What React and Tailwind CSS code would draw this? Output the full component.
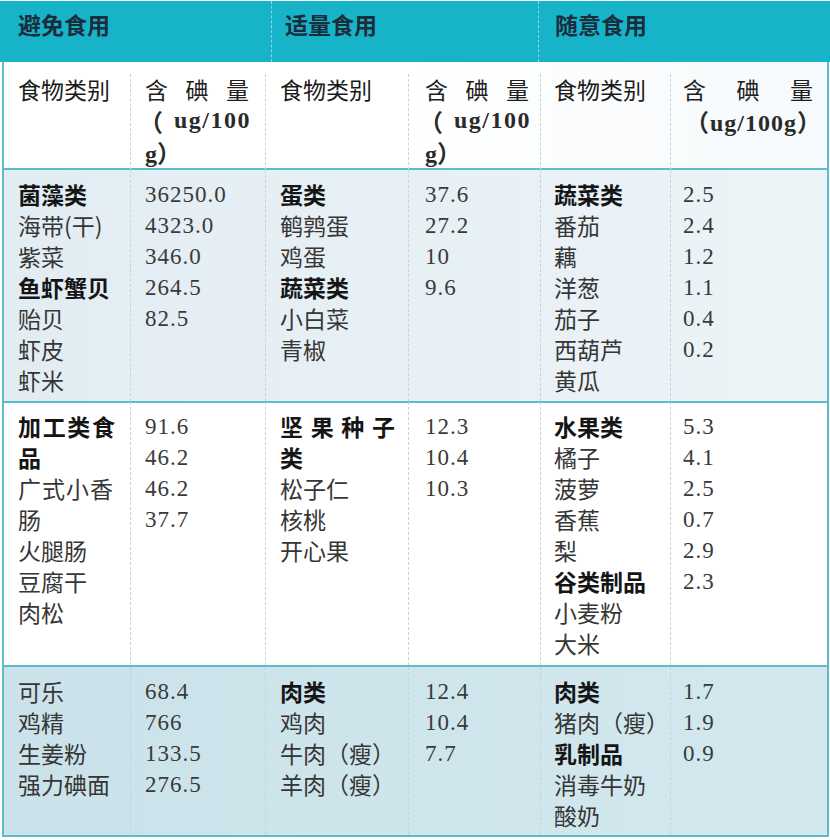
import React from "react";

const CJK = { fontFamily: '"Noto Sans CJK SC", sans-serif' };
const NUM = { fontFamily: '"Liberation Serif", "Noto Sans CJK SC", serif' };

const COLS = "grid grid-cols-[126px_135px_143px_132px_130px_157px]";

// padding + divider per column, written out in full
const CELL = [
  "pl-[14px]",
  "pl-[14px] border-l border-dashed border-[#c6d3d9]",
  "pl-[14px] border-l border-dashed border-[#c6d3d9]",
  "pl-[16px] border-l border-dashed border-[#c6d3d9]",
  "pl-[13px] border-l border-dashed border-[#c6d3d9]",
  "pl-[12px] border-l border-dashed border-[#c6d3d9]",
];

const ROWS = [
  {
    cls: "h-[233px] pt-[9px] bg-gradient-to-r from-[#e2edf3] via-[#e7f0f5] to-[#edf4f8]",
    cells: [
      [{ b: "菌藻类" }, "海带(干)", "紫菜", { b: "鱼虾蟹贝" }, "贻贝", "虾皮", "虾米"],
      ["36250.0", "4323.0", "346.0", "264.5", "82.5"],
      [{ b: "蛋类" }, "鹌鹑蛋", "鸡蛋", { b: "蔬菜类" }, "小白菜", "青椒"],
      ["37.6", "27.2", "10", "9.6"],
      [{ b: "蔬菜类" }, "番茄", "藕", "洋葱", "茄子", "西葫芦", "黄瓜"],
      ["2.5", "2.4", "1.2", "1.1", "0.4", "0.2"],
    ],
  },
  {
    cls: "h-[264px] pt-[8px] bg-white",
    cells: [
      [{ j: "加工类食", w: "w-[97px]", b: true }, { b: "品" }, { j: "广式小香", w: "w-[95px]" }, "肠", "火腿肠", "豆腐干", "肉松"],
      ["91.6", "46.2", "46.2", "37.7"],
      [{ j: "坚果种子", w: "w-[115px]", b: true }, { b: "类" }, "松子仁", "核桃", "开心果"],
      ["12.3", "10.4", "10.3"],
      [{ b: "水果类" }, "橘子", "菠萝", "香蕉", "梨", { b: "谷类制品" }, "小麦粉", "大米"],
      ["5.3", "4.1", "2.5", "0.7", "2.9", "2.3"],
    ],
  },
  {
    cls: "h-[170px] pt-[9px] bg-gradient-to-r from-[#cbe2ea] via-[#cfe5ec] to-[#d3e8ee]",
    cells: [
      ["可乐", "鸡精", "生姜粉", "强力碘面"],
      ["68.4", "766", "133.5", "276.5"],
      [{ b: "肉类" }, "鸡肉", "牛肉（瘦）", "羊肉（瘦）"],
      ["12.4", "10.4", "7.7"],
      [{ b: "肉类" }, "猪肉（瘦）", { b: "乳制品" }, "消毒牛奶", "酸奶"],
      ["1.7", "1.9", "0.9"],
    ],
  },
];

function Line({ item }) {
  if (typeof item === "string") {
    return <div className="whitespace-nowrap text-[#363636]">{item}</div>;
  }
  if (item.j) {
    return (
      <div className={`flex justify-between ${item.w} ${item.b ? "font-bold text-[#151515]" : "text-[#363636]"}`}>
        {item.j.split("").map((c, i) => (
          <span key={i}>{c}</span>
        ))}
      </div>
    );
  }
  return <div className="whitespace-nowrap font-bold text-[#151515]">{item.b}</div>;
}

function IodineHead({ wide }) {
  if (wide) {
    return (
      <div style={NUM} className="text-[#1f1f1f]">
        <div style={CJK} className="flex w-[130px] justify-between">
          <span>含</span>
          <span>碘</span>
          <span>量</span>
        </div>
        <div className="whitespace-nowrap pl-[2px] text-[24px] font-bold tracking-[1px] text-[#2a2a2a]">
          <span style={CJK}>（</span>ug/100g<span style={CJK}>）</span>
        </div>
      </div>
    );
  }
  return (
    <div style={NUM} className="text-[#1f1f1f]">
      <div style={CJK} className="flex w-[104px] justify-between">
        <span>含</span>
        <span>碘</span>
        <span>量</span>
      </div>
      <div className="-ml-[6px] flex w-[112px] justify-between whitespace-nowrap text-[24px] font-bold tracking-[1.5px] text-[#2a2a2a]">
        <span style={CJK}>（</span>
        <span>ug/100</span>
      </div>
      <div className="whitespace-nowrap text-[24px] font-bold text-[#2a2a2a]">
        g<span style={CJK}>）</span>
      </div>
    </div>
  );
}

export default function App() {
  return (
    <div className="w-[830px] h-[840px] bg-white pt-[1px] overflow-hidden text-[23px] leading-[31px]" style={CJK}>
      {/* top band */}
      <div className="grid h-[61px] grid-cols-[271px_267px_292px] bg-[#17b4c9] font-semibold text-[#1b2d3a]">
        <div className="pl-[18px] pt-[8px]">避免食用</div>
        <div className="border-l border-dashed border-[#8ed5df] pl-[13px] pt-[8px]">适量食用</div>
        <div className="border-l border-dashed border-[#8ed5df] pl-[16px] pt-[8px]">随意食用</div>
      </div>

      <div className="ml-[2px] w-[827px] border-x-2 border-[#5cbccb]">
        {/* column titles */}
        <div className={`${COLS} h-[108px] border-b-2 border-[#5cbccb] bg-gradient-to-r from-white via-white to-[#f6fafc] pt-[12px]`}>
          <div className={`${CELL[0]} text-[#1a1a1a]`}>食物类别</div>
          <div className={CELL[1]}>
            <IodineHead />
          </div>
          <div className={`${CELL[2]} text-[#1a1a1a]`}>食物类别</div>
          <div className={CELL[3]}>
            <IodineHead />
          </div>
          <div className={`${CELL[4]} text-[#1a1a1a]`}>食物类别</div>
          <div className={CELL[5]}>
            <IodineHead wide />
          </div>
        </div>

        {ROWS.map((row, r) => (
          <div key={r} className={`${COLS} ${row.cls} border-b-2 border-[#5cbccb]`}>
            {row.cells.map((items, c) =>
              c % 2 === 1 ? (
                <div key={c} className={`${CELL[c]} -mt-[9px] pt-[9px] text-[23px] tracking-[1px] text-[#3a3a3a]`} style={NUM}>
                  {items.map((n, i) => (
                    <div key={i} className="leading-[31px]">{n}</div>
                  ))}
                </div>
              ) : (
                <div key={c} className={`${CELL[c]} -mt-[9px] pt-[9px]`}>
                  {items.map((it, i) => (
                    <Line key={i} item={it} />
                  ))}
                </div>
              )
            )}
          </div>
        ))}
      </div>
    </div>
  );
}
